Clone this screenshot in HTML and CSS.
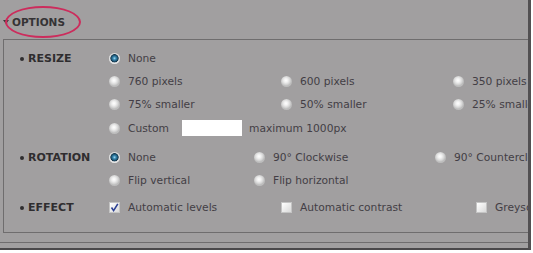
FILE: index.html
```html
<!DOCTYPE html>
<html lang="en">
<head>
    <meta charset="UTF-8">
    <meta name="viewport" content="width=device-width, initial-scale=1.0">
    <title>Options</title>
    <link rel="stylesheet" href="styles.css">
</head>
<body>
    <div class="frame">
        <div class="header">
            <span class="arrow"></span>
            <span class="title">OPTIONS</span>
            <span class="circle-mark"></span>
        </div>

        <div class="panel">
            <div class="section resize">
                <div class="label">RESIZE</div>
                <div class="options">
                    <div class="opt"><span class="radio checked"></span>None</div>
                    <div></div>
                    <div></div>
                    <div class="opt"><span class="radio"></span>760 pixels</div>
                    <div class="opt"><span class="radio"></span>600 pixels</div>
                    <div class="opt"><span class="radio"></span>350 pixels</div>
                    <div class="opt"><span class="radio"></span>75% smaller</div>
                    <div class="opt"><span class="radio"></span>50% smaller</div>
                    <div class="opt"><span class="radio"></span>25% smaller</div>
                    <div class="opt custom">
                        <span class="radio"></span>
                        <span class="custom-text">Custom</span>
                        <span class="text-box"></span>
                        maximum 1000px
                    </div>
                </div>
            </div>

            <div class="section rotation">
                <div class="label">ROTATION</div>
                <div class="options">
                    <div class="opt"><span class="radio checked"></span>None</div>
                    <div class="opt"><span class="radio"></span>90° Clockwise</div>
                    <div class="opt"><span class="radio"></span>90° Counterclockwise</div>
                    <div class="opt"><span class="radio"></span>Flip vertical</div>
                    <div class="opt"><span class="radio"></span>Flip horizontal</div>
                </div>
            </div>

            <div class="section effect">
                <div class="label">EFFECT</div>
                <div class="options">
                    <div class="opt">
                        <span class="check">
                            <svg width="11" height="11" viewBox="0 0 11 11"><path d="M2.5 5.5 L4.6 8.6 L8.8 1.8" fill="none" stroke="#2b3f93" stroke-width="1.6"/></svg>
                        </span>Automatic levels
                    </div>
                    <div class="opt"><span class="check"></span>Automatic contrast</div>
                    <div class="opt"><span class="check"></span>Greyscale</div>
                </div>
            </div>
        </div>

        <div class="foot"></div>
    </div>
</body>
</html>
```

FILE: styles.css
```css
body {
    margin: 0;
    background: #fff;
    font-family: "DejaVu Sans", Verdana, sans-serif;
}

.frame {
    width: 528px;
    height: 248px;
    background: #a19fa0;
    border-right: 3px solid #525052;
    border-bottom: 2px solid #4a484a;
    overflow: hidden;
}

.header {
    position: relative;
    height: 39px;
    display: flex;
    align-items: center;
    padding: 4px 0 0 3px;
    box-sizing: border-box;
}

.arrow {
    width: 0;
    height: 0;
    border-left: 3px solid transparent;
    border-right: 3px solid transparent;
    border-top: 4px solid #3a3a3a;
    margin-right: 3px;
}

.title {
    font-size: 10.5px;
    font-weight: bold;
    color: #353335;
}

.circle-mark {
    position: absolute;
    left: 5px;
    top: 6px;
    width: 72px;
    height: 28px;
    border: 2px solid #cc2c5c;
    border-radius: 50%;
}

.panel {
    margin-left: 3px;
    height: 194px;
    box-sizing: border-box;
    border: 1px solid #6f6d6e;
    border-right: none;
    padding-top: 7px;
    overflow: hidden;
}

.section {
    display: flex;
}

.rotation {
    margin-top: 7px;
}

.effect {
    margin-top: 4px;
}

.label {
    width: 105px;
    flex-shrink: 0;
    box-sizing: border-box;
    padding-left: 16px;
    height: 23px;
    display: flex;
    align-items: center;
    font-size: 11px;
    font-weight: bold;
    color: #2f2d2f;
}

.label::before {
    content: "";
    width: 4px;
    height: 4px;
    border-radius: 50%;
    background: #2f2d2f;
    margin-right: 4px;
}

.options {
    display: grid;
    grid-auto-rows: 23px;
}

.resize .options {
    grid-template-columns: 172px 172px 172px;
}

.rotation .options {
    grid-template-columns: 145px 181px 172px;
}

.effect .options {
    grid-template-columns: 172px 195px 172px;
}

.opt {
    display: flex;
    align-items: center;
    white-space: nowrap;
    font-size: 10.7px;
    color: #433e45;
}

.custom {
    grid-column: 1 / -1;
    height: 24px;
}

.custom-text {
    width: 54px;
}

.text-box {
    width: 60px;
    height: 16px;
    background: #fff;
    margin-right: 7px;
}

.radio {
    width: 11px;
    height: 11px;
    border-radius: 50%;
    margin-right: 8px;
    flex-shrink: 0;
    background: radial-gradient(circle at 45% 40%, #ffffff 0, #f0f0f0 2px, #d6d6d6 4px, #bdbdbd 5.5px);
}

.radio.checked {
    background: radial-gradient(circle at 50% 48%, #a8dcf2 0, #3a8bb4 1.5px, #1d5676 3px, #17384c 3.8px, #cfd2d4 4.4px, #eeeeee 5.5px);
}

.check {
    width: 11px;
    height: 11px;
    margin-right: 8px;
    flex-shrink: 0;
    box-sizing: border-box;
    border: 1px solid #c4c4c4;
    background: linear-gradient(135deg, #ffffff, #d9d9d9);
    display: flex;
}

.check svg {
    margin: -1px;
}

.foot {
    height: 9px;
    border-bottom: 1px solid #6f6d6e;
}
```
